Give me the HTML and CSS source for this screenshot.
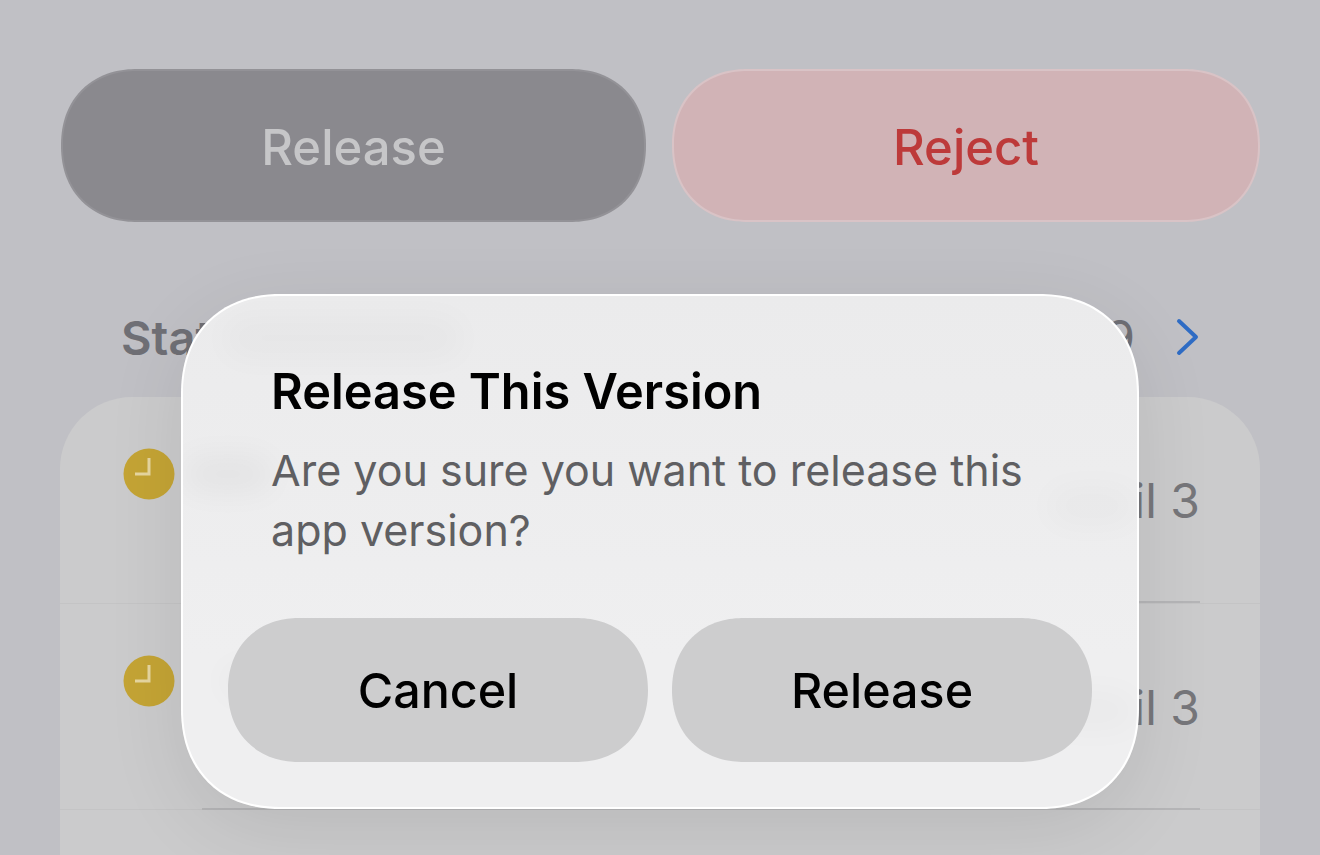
FILE: index.html
```html
<!DOCTYPE html>
<html lang="en">
<head>
<meta charset="utf-8">
<title>Release This Version</title>
<link rel="stylesheet" href="styles.css">
</head>
<body>
<main class="page">
  <div class="actions">
    <button class="action action-release">Release</button>
    <button class="action action-reject">Reject</button>
  </div>
  <div class="section-head">
    <span class="section-title">Status History</span>
    <span class="section-link">
      <span class="section-count">9</span>
      <svg class="chevron" width="24" height="38" viewBox="0 0 24 38" aria-hidden="true"><path d="M3 3 L20 19 L3 35" fill="none" stroke="#2f6cc4" stroke-width="4" stroke-linecap="round" stroke-linejoin="round"/></svg>
    </span>
  </div>
  <section class="card">
    <div class="row">
      <svg class="clock" width="52" height="52" viewBox="0 0 52 52" aria-hidden="true"><circle cx="26" cy="26" r="25.5" fill="#c4a435"/><path d="M26 10 V26 H12" fill="none" stroke="#e6d6a0" stroke-width="3"/></svg>
      <div class="row-body">
        <span class="row-date">April 3</span>
      </div>
    </div>
    <div class="row">
      <svg class="clock" width="52" height="52" viewBox="0 0 52 52" aria-hidden="true"><circle cx="26" cy="26" r="25.5" fill="#c4a435"/><path d="M26 10 V26 H12" fill="none" stroke="#e6d6a0" stroke-width="3"/></svg>
      <div class="row-body">
        <span class="row-date">April 3</span>
      </div>
    </div>
  </section>
</main>
<div class="dialog" role="dialog" aria-modal="true">
  <div class="smudges" aria-hidden="true">
    <span class="smudge smudge-head"></span>
    <span class="smudge smudge-row-one"></span>
    <span class="smudge smudge-row-two"></span>
    <span class="smudge smudge-date-one"></span>
    <span class="smudge smudge-date-two"></span>
  </div>
  <h2 class="dialog-title">Release This Version</h2>
  <p class="dialog-text">Are you sure you want to release this app version?</p>
  <div class="dialog-buttons">
    <button class="dialog-button">Cancel</button>
    <button class="dialog-button">Release</button>
  </div>
</div>
</body>
</html>
```

FILE: styles.css
```css
* { box-sizing: border-box; }
html, body { margin: 0; }
body {
  height: 855px;
  overflow: hidden;
  background: #c0c0c5;
  font-family: Inter, "Liberation Sans", sans-serif;
}
.page { padding: 69px 60px 0 61px; }
.actions { display: flex; gap: 26px; }
.action {
  height: 153px;
  border-radius: 76px;
  corner-shape: superellipse(1.12);
  padding: 4px 0 0;
  font: 500 49px/1 Inter, sans-serif;
}
.action-release {
  flex: 0 0 585px;
  background: #8a898e;
  border: 2px solid #939297;
  color: #c6c6c8;
}
.action-reject {
  flex: 0 0 588px;
  background: #d1b3b6;
  border: 2px solid #d9c3c6;
  color: #bd3a3a;
}
.section-head {
  display: flex;
  justify-content: space-between;
  align-items: center;
  margin-top: 90px;
  padding: 0 60px;
  height: 50px;
}
.section-title { font-size: 47px; font-weight: 600; color: #6f6f75; }
.section-link { display: flex; align-items: center; gap: 41px; }
.section-count { font-size: 48px; color: #6f6f75; }
.card {
  margin: 35px 0 0 -1px;
  height: 458px;
  background: #cbcbcc;
  border-radius: 72px 72px 0 0;
}
.row {
  display: flex;
  align-items: flex-start;
  gap: 27px;
  padding: 51px 60px 0 63px;
  height: 206.5px;
  border-bottom: 1px solid #c4c4c5;
}
.clock { flex: none; }
.row-body {
  flex: 1;
  height: 155px;
  display: flex;
  justify-content: flex-end;
  align-items: center;
  border-bottom: 2px solid #b5b5b7;
  padding-bottom: 48px;
  font-size: 48px;
}
.row-date { color: #76767a; }
.dialog {
  position: absolute;
  left: 181px;
  top: 294px;
  width: 958px;
  height: 515px;
  padding: 70px 45px 45px;
  border: 2px solid #fff;
  border-radius: 100px;
  corner-shape: superellipse(1.15);
  background: linear-gradient(#ebebec, #efeff0 70%);
  box-shadow: 0 20px 80px rgba(0, 0, 0, 0.09);
}
.smudges {
  position: absolute;
  inset: 0;
  overflow: hidden;
  border-radius: inherit;
}
.smudge {
  position: absolute;
  background: #000;
  opacity: 0.02;
  filter: blur(16px);
  border-radius: 20px;
}
.smudge-head { left: 40px; top: 20px; width: 240px; height: 44px; }
.smudge-row-one { left: 0; top: 160px; width: 90px; height: 36px; opacity: 0.04; }
.smudge-row-two { left: 40px; top: 370px; width: 90px; height: 30px; opacity: 0.03; }
.smudge-date-one { right: 0; top: 190px; width: 90px; height: 40px; }
.smudge-date-two { right: 0; top: 395px; width: 90px; height: 40px; }
.dialog-title {
  position: relative;
  margin: 0 0 0 43px;
  font-size: 48.7px;
  line-height: 52px;
  font-weight: 600;
  color: #000;
}
.dialog-text {
  position: relative;
  margin: 22px 30px 0 43px;
  font-size: 43px;
  line-height: 60px;
  color: #5f5f62;
}
.dialog-buttons {
  position: relative;
  display: flex;
  gap: 24px;
  margin-top: 58px;
}
.dialog-button {
  flex: 1;
  height: 144px;
  border: 0;
  border-radius: 72px;
  corner-shape: superellipse(1.12);
  padding: 2px 0 0;
  background: #cdcdce;
  color: #000;
  font: 500 48.4px/1 Inter, sans-serif;
}
```
